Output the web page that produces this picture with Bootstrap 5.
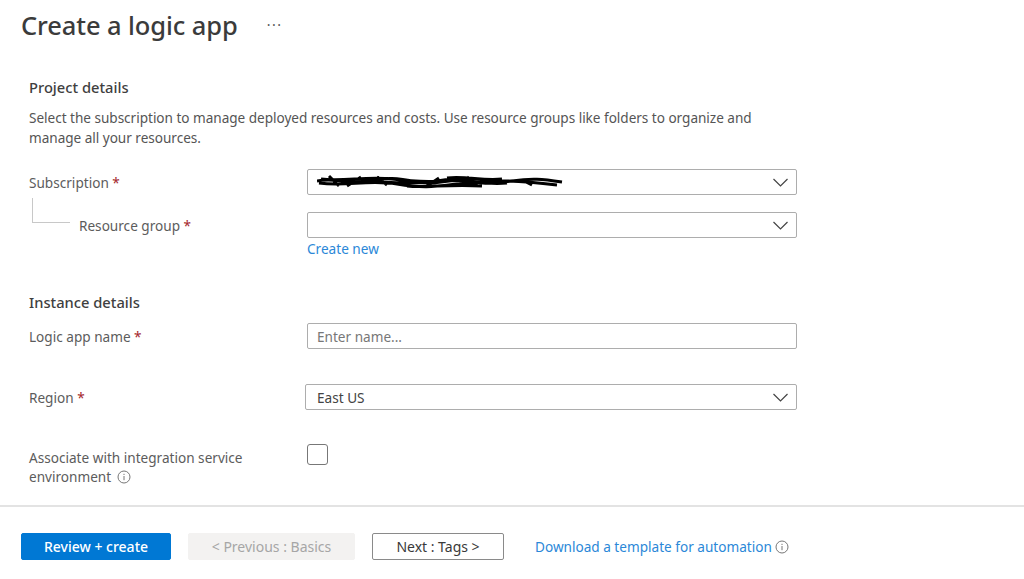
<!DOCTYPE html>
<html lang="en"><head><meta charset="utf-8"><title>Create a logic app</title>
<link href="https://cdn.jsdelivr.net/npm/bootstrap@5.3.0/dist/css/bootstrap.min.css" rel="stylesheet">
<style>
html,body{height:579px;overflow:hidden}
body{font-family:"Noto Sans","Open Sans",sans-serif;font-size:13.6px;color:#555;background:#fff;line-height:19px}
.hdr{padding:8px 0 0 21px;height:77px;gap:29px}
.hdr h1{font-size:25.5px;line-height:34px;font-weight:500;color:#3b3b3b;margin:0;letter-spacing:-.1px}
.dots{font-size:14px;color:#555;line-height:34px;letter-spacing:1.5px}
.formwrap{padding-left:29px;width:797px;height:428px}
.sect{font-size:14.7px;font-weight:500;color:#3f3f3f;line-height:20px;margin:0}
.desc{margin:11px 0 0;width:740px;color:#555;line-height:20px;letter-spacing:-.03px}
.frow{display:flex;align-items:center;height:26px}
.lbl{width:278px;flex:none;white-space:nowrap;color:#5c5c5c}
.req{color:#a4262c}
.fld{flex:1;height:26px;border:1px solid #adadad;border-radius:2px;display:flex;align-items:center;justify-content:space-between;padding:0 9px;color:#444;background:#fff;min-width:0}
.fld::placeholder{color:#777}
.wide{margin-left:-2px;padding-left:11px}
.chev{width:15px;height:9px;margin-right:-1px;flex:none}
.r1{margin-top:21px}.r2{margin-top:17px;position:relative}
.indent{padding-left:50px}
.tree{position:absolute;left:3px;top:-14px;width:38px;height:25px;border-left:1px solid #c8c8c8;border-bottom:1px solid #c8c8c8}
.cnew{margin:1px 0 0 278px;height:20px}
a.lnk{color:#2b88d8;text-decoration:none}
.i2{margin-top:33px}
.r3{margin-top:11px}.r4{margin-top:35px}
.r5{margin-top:34px;display:flex;align-items:flex-start}
.r5 .lbl{white-space:normal;width:278px;padding-right:40px;line-height:19px;margin-top:4px}
.cb{width:21px;height:21px;border:1px solid #777;border-radius:3px;background:#fff}
.ftr{border-top:2px solid #e3e3e3;padding:26px 0 0 21px;align-items:center}
.bt{height:27px;border-radius:2px;font-size:14px;line-height:25px;padding:0;text-align:center}
.b1{width:150px;background:#0078d4;color:#fff;border:1px solid #0078d4;font-weight:500}
.b2{width:167px;margin-left:17px;background:#f3f2f1;color:#a6a6a6;border:1px solid #f3f2f1}
.b3{width:132px;margin-left:17px;background:#fff;color:#3a3a3a;border:1px solid #8a8a8a}
.dl{margin-left:31px;white-space:nowrap}
.inf{width:14px;height:14px;vertical-align:-2px}
.lbl .inf{margin-left:-1px}
</style></head>
<body>
<div class="d-flex hdr"><h1>Create a logic app</h1><span class="dots">···</span></div>
<div class="formwrap">
 <h2 class="sect">Project details</h2>
 <p class="desc">Select the subscription to manage deployed resources and costs. Use resource groups like folders to organize and manage all your resources.</p>
 <div class="frow r1"><div class="lbl">Subscription <span class="req">*</span></div>
  <div class="fld"><svg width="246" height="18" viewBox="0 0 246 18"><path d="M0 8C20 4 30 12 50 8S80 5 100 9 130 5 150 8 175 11 195 8 225 6 245 9M2 10C30 14 50 6 80 11S120 13 150 10 200 7 240 12M4 6C25 9 50 3 75 6S120 10 140 6M30 9C60 7 90 13 120 8S160 13 190 10M90 13C110 15 130 11 165 13M130 5C150 3 165 8 185 6M12 3L22 13M30 13L44 4M60 4L70 12M110 13L122 5M150 4L160 12M205 7L215 12" fill="none" stroke="#000" stroke-width="3"/></svg>
  <svg class="chev" viewBox="0 0 15 9"><path d="M.5 1l7 7 7-7" fill="none" stroke="#444" stroke-width="1.2"/></svg></div></div>
 <div class="frow r2"><span class="tree"></span><div class="lbl indent">Resource group <span class="req">*</span></div>
  <div class="fld"><span></span><svg class="chev" viewBox="0 0 15 9"><path d="M.5 1l7 7 7-7" fill="none" stroke="#444" stroke-width="1.2"/></svg></div></div>
 <div class="cnew"><a class="lnk" href="#">Create new</a></div>
 <h2 class="sect i2">Instance details</h2>
 <div class="frow r3"><div class="lbl">Logic app name <span class="req">*</span></div>
  <input class="fld" type="text" placeholder="Enter name..." aria-label="Logic app name"></div>
 <div class="frow r4"><div class="lbl">Region <span class="req">*</span></div>
  <div class="fld wide"><span>East US</span><svg class="chev" viewBox="0 0 15 9"><path d="M.5 1l7 7 7-7" fill="none" stroke="#444" stroke-width="1.2"/></svg></div></div>
 <div class="r5"><div class="lbl">Associate with integration service environment &nbsp;<svg class="inf" viewBox="0 0 14 14"><circle cx="7" cy="7" r="6" fill="none" stroke="#777"/><path d="M7 6v4.200M7 3.800v1.200" stroke="#777"/></svg></div><div class="cb"></div></div>
</div>
<div class="d-flex ftr">
 <button class="bt b1">Review + create</button>
 <button class="bt b2" disabled>&lt; Previous : Basics</button>
 <button class="bt b3">Next : Tags &gt;</button>
 <div class="dl"><a class="lnk" href="#">Download a template for automation</a> <svg class="inf" viewBox="0 0 14 14"><circle cx="7" cy="7" r="6" fill="none" stroke="#777"/><path d="M7 6v4.200M7 3.800v1.200" stroke="#777"/></svg></div>
</div>
<script src="https://cdn.jsdelivr.net/npm/bootstrap@5.3.0/dist/js/bootstrap.bundle.min.js"></script>
</body></html>
